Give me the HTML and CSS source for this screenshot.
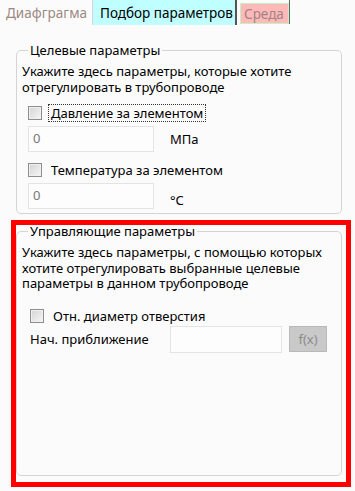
FILE: index.html
```html
<!DOCTYPE html>
<html lang="ru">
<head>
<meta charset="utf-8">
<link rel="stylesheet" href="styles.css">
</head>
<body>
<div class="tabs">
  <div class="tab tab-diaf">Диафграгма</div>
  <div class="tab tab-sel">Подбор параметров</div>
  <div class="tab tab-env">Среда</div>
</div>

<fieldset class="group group-target">
  <legend>Целевые параметры</legend>
  <p class="hint">Укажите здесь параметры, которые хотите отрегулировать в трубопроводе</p>
  <div class="check-row row-pressure"><span class="cb"></span><span class="cb-label focused">Давление за элементом</span></div>
  <div class="value-row"><div class="input">0</div><span class="unit">МПа</span></div>
  <div class="check-row row-temp"><span class="cb"></span><span class="cb-label">Температура за элементом</span></div>
  <div class="value-row"><div class="input">0</div><span class="unit unit-low">°С</span></div>
</fieldset>

<div class="highlight">
  <fieldset class="group group-control">
    <legend>Управляющие параметры</legend>
    <p class="hint">Укажите здесь параметры, с помощью которых хотите отрегулировать выбранные целевые параметры в данном трубопроводе</p>
    <div class="check-row row-diam"><span class="cb"></span><span class="cb-label">Отн. диаметр отверстия</span></div>
    <div class="approx-row"><span class="approx-label">Нач. приближение</span><div class="input input-approx"></div><div class="fx">f(x)</div></div>
  </fieldset>
</div>
</body>
</html>
```

FILE: styles.css
```css
* { box-sizing: border-box; }
html, body {
  margin: 0;
  padding: 0;
  background: #fbfbfb;
  font-family: "Noto Sans", "DejaVu Sans", sans-serif;
  font-size: 13px;
  color: #000;
}
.tabs {
  display: flex;
  height: 25px;
  align-items: stretch;
}
.tab {
  display: flex;
  align-items: center;
  font-size: 13.5px;
  white-space: nowrap;
}
.tab-diaf {
  color: #9c8a82;
  padding: 0 5px 0 6px;
  width: 92px;
}
.tab-sel {
  background: #bfffff;
  border-left: 1px solid #d8d8d8;
  border-right: 2px solid #555;
  width: 145px;
  padding-left: 7px;
}
.tab-env {
  margin-left: 3px;
  margin-top: 3px;
  margin-bottom: 1px;
  background: #ffb9b9;
  border: 1px solid #c4f0c4;
  color: #a08484;
  width: 49px;
  padding-left: 3px;
}
.tabs::after {
  content: "";
  width: 1px;
  background: #666;
  height: 24px;
  margin-left: 0;
}

.group {
  margin: 0;
  border: 1px solid #d4d4d4;
  border-radius: 5px;
  padding: 0 0 0 5px;
}
.group legend {
  padding: 0 2px;
  margin-left: 6px;
  line-height: 15px;
}
.group-target {
  margin: 18px 0 0 16px;
  width: 326px;
  height: 171px;
}
.hint {
  margin: 6px 0 0 0;
  line-height: 15.5px;
}
.check-row {
  display: flex;
  align-items: center;
  height: 18px;
}
.row-pressure { margin: 9px 0 0 6px; }
.row-temp { margin: 9px 0 0 6px; }
.row-diam { margin: 15px 0 0 8px; }
.cb {
  width: 14px;
  height: 14px;
  border: 1px solid #8e8e8e;
  background: linear-gradient(135deg, #d4d4d4, #f6f6f6);
  box-shadow: inset 0 0 0 1px #f0f0f0;
  flex: none;
}
.cb-label {
  margin-left: 6px;
  padding: 0 2px;
  line-height: 16px;
  border: 1px solid transparent;
}
.cb-label.focused { border: 1px dotted #333; }
.value-row {
  display: flex;
  align-items: center;
  margin: 4px 0 0 6px;
}
.input {
  width: 126px;
  height: 26px;
  border: 1px solid #e4e4e4;
  background: #fdfdfd;
  padding: 3px 0 0 4px;
  color: #777;
  line-height: 16px;
}
.unit { margin-left: 16px; }
.unit-low { margin-top: 8px; }
.highlight {
  margin: 6px 0 0 11px;
  width: 340px;
  height: 267px;
  border: 5px solid #ff0000;
  padding: 0 5px 5px 0;
}
.group-control {
  width: 326px;
  height: 100%;
  margin-top: -1px;
}
.approx-row {
  display: flex;
  align-items: center;
  margin: 1px 0 0 8px;
}
.approx-label { width: 140px; }
.input-approx { width: 112px; height: 27px; }
.fx {
  margin-left: 7px;
  width: 38px;
  height: 26px;
  background: #c9c9c9;
  border: 1px solid #b9b9b9;
  color: #8c8c8c;
  display: flex;
  align-items: center;
  justify-content: center;
}
```
